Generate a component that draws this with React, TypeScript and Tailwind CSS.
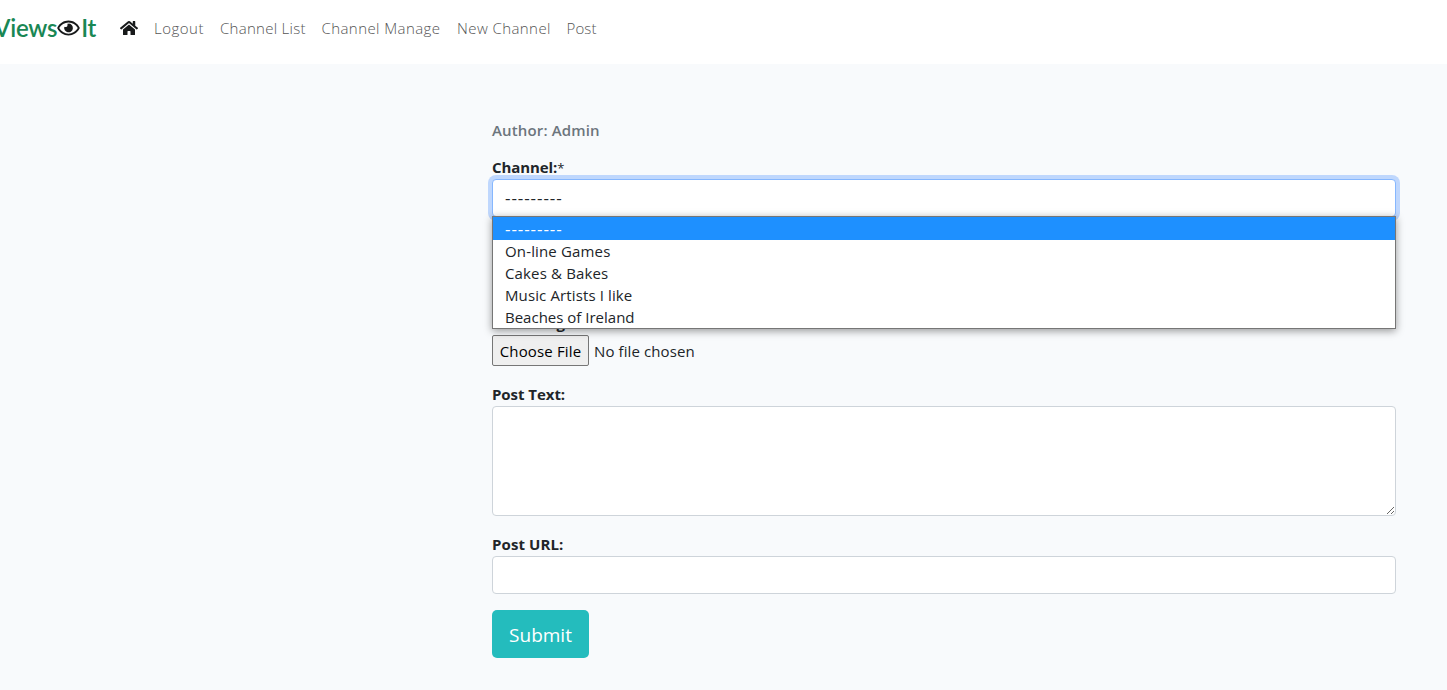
import { FaRegEye, FaHome } from 'react-icons/fa';

const links = [
  { label: 'Logout', style: 'w-[50px] tracking-[0.5px]' },
  { label: 'Channel List', style: 'w-[85.5px] tracking-[0.28px]' },
  { label: 'Channel Manage', style: 'w-[119.5px] tracking-[0.42px]' },
  { label: 'New Channel', style: 'w-[93.5px] tracking-[0.42px]' },
  { label: 'Post', style: 'w-[30px] tracking-[0.15px]' },
];

const options = [
  { label: 'On-line Games', style: 'tracking-[0.15px]' },
  { label: 'Cakes & Bakes', style: 'tracking-[0.15px]' },
  { label: 'Music Artists I like', style: 'tracking-[0.12px]' },
  { label: 'Beaches of Ireland', style: 'tracking-normal' },
];

const labelClass = 'block h-6 text-[15px] leading-6 font-bold text-[#212529]';
const fieldClass = 'block w-full rounded border border-[#ced4da] bg-white outline-none';

export default function App() {
  return (
    <div className="flex h-[690px] w-full flex-col overflow-hidden bg-[#f8fafc] font-['Open_Sans',sans-serif] text-[#212529]">
      <header className="flex h-16 shrink-0 items-start bg-white pt-4">
        <a className="-ml-[6px] flex h-6 w-[126px] items-center font-['Lato',sans-serif] text-2xl leading-6 font-semibold tracking-[-0.25px] text-[#198754]">
          Views
          <FaRegEye className="h-5 w-[23px] shrink-0 text-[#181a1b]" />
          <span className="ml-px">It</span>
        </a>
        <FaHome className="mt-[3px] mr-4 h-[18px] w-[18px] shrink-0 text-[#181a1b]" />
        <nav className="flex gap-4 text-[15px] leading-6 font-light text-[#555]">
          {links.map((l) => (
            <a key={l.label} className={`${l.style} whitespace-nowrap`}>{l.label}</a>
          ))}
        </nav>
      </header>
      <main className="ml-[492px] w-[904px] pt-[54px]">
        <p className="h-[37px] text-[15px] leading-6 font-semibold tracking-[0.15px] text-[#6c757d]">Author: Admin</p>
        <div className="relative mb-4">
          <label className={`${labelClass} tracking-[-0.1px]`}>
            Channel:<span className="text-[13px] font-normal">*</span>
          </label>
          <div className="h-[38px] rounded border border-[#86b7fe] bg-white px-3 text-[17px] leading-9 tracking-[0.93px] ring-4 ring-[#bfd7fd]">
            ---------
          </div>
          <ul className="absolute top-[61px] left-0 z-10 h-[113px] w-full border border-[#767676] bg-white text-[15px] leading-[22px] font-normal shadow-[0_2px_8px_rgba(0,0,0,0.4)]">
            <li className="h-[23px] bg-[#1e90ff] px-3 text-[17px] leading-6 tracking-[0.93px] text-white">---------</li>
            {options.map((o) => (
              <li key={o.label} className={`${o.style} h-[22px] px-3`}>{o.label}</li>
            ))}
          </ul>
        </div>
        <div className="mb-4 pt-6">
          <input className={`${fieldClass} h-[38px]`} />
        </div>
        <div className="mb-4">
          <label className={`${labelClass} tracking-[-0.1px]`}>Post Image:</label>
          <div className="flex h-[31px] items-center gap-[5px] text-[15px]">
            <button className="h-[31px] w-[97px] rounded-[2px] border border-[#767676] bg-[#efefef] pt-px tracking-[0.15px] whitespace-nowrap text-black">
              Choose File
            </button>
            <span className="pt-px tracking-[0.1px]">No file chosen</span>
          </div>
        </div>
        <div className="mb-4">
          <label className={`${labelClass} tracking-[-0.05px]`}>Post Text:</label>
          <textarea className={`${fieldClass} h-[110px] resize-y`} />
        </div>
        <div className="mb-4">
          <label className={`${labelClass} tracking-[0.1px]`}>Post URL:</label>
          <input className={`${fieldClass} h-[38px]`} />
        </div>
        <button className="h-12 w-[97px] rounded-[5px] bg-[#24bcbd] pt-0.5 text-[19px] text-white">Submit</button>
      </main>
    </div>
  );
}
